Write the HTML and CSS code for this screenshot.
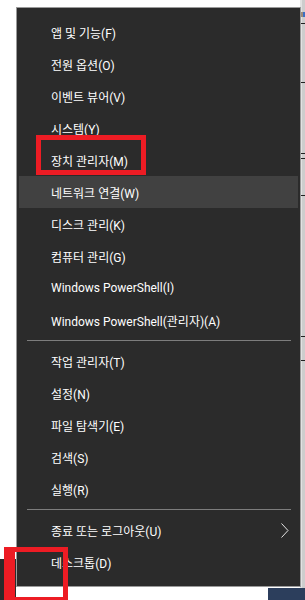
FILE: index.html
```html
<!DOCTYPE html>
<html lang="ko">
<head>
<meta charset="utf-8">
<title>Win+X 메뉴</title>
<link rel="stylesheet" href="styles.css">
</head>
<body>
<div class="desk">
  <div class="edge">
    <span class="icon-bit"></span>
    <span class="tick t1"></span>
    <span class="tick t2"></span>
    <span class="tick t3"></span>
    <span class="tick t4"></span>
    <span class="tick t5"></span>
    <span class="tick t6"></span>
    <span class="tick t7"></span>
  </div>
  <div class="taskbar-left"></div>
  <div class="taskbar-right"></div>

  <div class="menu">
    <ul class="list">
      <li class="item">앱 및 기능(F)</li>
      <li class="item">전원 옵션(O)</li>
      <li class="item">이벤트 뷰어(V)</li>
      <li class="item">시스템(Y)</li>
      <li class="item">장치 관리자(M)</li>
      <li class="item hover">네트워크 연결(W)</li>
      <li class="item">디스크 관리(K)</li>
      <li class="item">컴퓨터 관리(G)</li>
      <li class="item">Windows PowerShell(I)</li>
      <li class="item">Windows PowerShell(관리자)(A)</li>
      <li class="sep"></li>
      <li class="item">작업 관리자(T)</li>
      <li class="item">설정(N)</li>
      <li class="item">파일 탐색기(E)</li>
      <li class="item">검색(S)</li>
      <li class="item">실행(R)</li>
      <li class="sep"></li>
      <li class="item sub">종료 또는 로그아웃(U)
        <svg class="chev" width="8" height="15" viewBox="0 0 8 15"><polyline points="0.5,0.5 7,7.5 0.5,14.5" fill="none" stroke="#e6e6e6" stroke-width="1"/></svg>
      </li>
      <li class="item">데스크톱(D)</li>
    </ul>
  </div>

  <div class="mark mark-device"></div>
  <div class="mark mark-start"></div>
</div>
</body>
</html>
```

FILE: styles.css
```css
* { box-sizing: border-box; }
html, body { margin: 0; padding: 0; background: #ffffff; }
body {
  font-family: Roboto, "Noto Sans CJK KR", sans-serif;
  font-size: 12px;
  color: #ffffff;
}
.desk {
  position: relative;
  width: 305px;
  height: 600px;
  overflow: hidden;
  background: #ffffff;
}
.edge {
  position: absolute;
  left: 300px;
  top: 0;
  width: 5px;
  height: 588px;
  background: linear-gradient(to right, #e2e2e2 0, #e2e2e2 2px, #cdcdcd 2px, #cdcdcd 5px);
}
.icon-bit {
  position: absolute;
  left: 1px;
  top: 12px;
  width: 4px;
  height: 5px;
  background: #9c8a78;
  border-right: 2px solid #3b6fc4;
}
.tick {
  position: absolute;
  left: 1px;
  width: 4px;
  height: 1px;
  background: #222;
}
.t1 { top: 23px; }
.t2 { top: 82px; }
.t3 { top: 153px; }
.t4 { top: 158px; }
.t5 { top: 195px; }
.t6 { top: 336px; }
.t7 { top: 360px; }
.taskbar-left {
  position: absolute;
  left: 0;
  top: 559px;
  width: 16px;
  height: 41px;
  background: #2a2a2a;
}
.taskbar-right {
  position: absolute;
  left: 268px;
  top: 588px;
  width: 37px;
  height: 12px;
  background: #2c3e5c;
}
.menu {
  position: absolute;
  left: 16px;
  top: 7px;
  width: 285px;
  height: 580px;
  background: #2b2b2b;
  border: 1px solid #9a9a9a;
  padding: 8px 2px;
}
.list {
  list-style: none;
  margin: 0;
  padding: 0;
}
.item {
  display: flex;
  align-items: center;
  height: 32px;
  padding-left: 32px;
  padding-right: 9px;
  white-space: nowrap;
}
.item.hover { background: #414141; }
.sep {
  height: 1px;
  margin: 4px 7px 4px 8px;
  background: #7d7d7d;
}
.chev { margin-left: auto; display: block; }
.mark {
  position: absolute;
  border: 5px solid #ed1c24;
}
.mark-device {
  left: 36px;
  top: 135px;
  width: 110px;
  height: 40px;
}
.mark-start {
  left: 4px;
  top: 547px;
  width: 64px;
  height: 53px;
  border-left-width: 11px;
  border-bottom-width: 3px;
}
```
